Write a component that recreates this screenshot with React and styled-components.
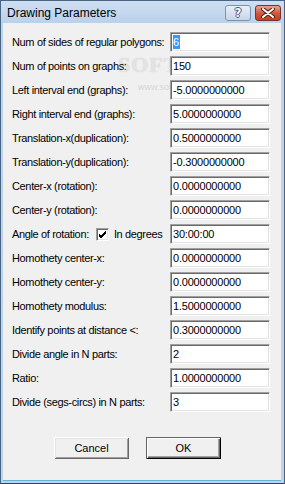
import React from "react";
import styled, { createGlobalStyle } from "styled-components";

const fields = [
    { label: "Num of sides of regular polygons:", value: "6", selected: true },
    { label: "Num of points on graphs:", value: "150" },
    { label: "Left interval end (graphs):", value: "-5.0000000000" },
    { label: "Right interval end (graphs):", value: "5.0000000000" },
    { label: "Translation-x(duplication):", value: "0.5000000000" },
    { label: "Translation-y(duplication):", value: "-0.3000000000" },
    { label: "Center-x (rotation):", value: "0.0000000000" },
    { label: "Center-y (rotation):", value: "0.0000000000" },
    { label: "Angle of rotation:", value: "30:00:00", checkbox: "In degrees" },
    { label: "Homothety center-x:", value: "0.0000000000" },
    { label: "Homothety center-y:", value: "0.0000000000" },
    { label: "Homothety modulus:", value: "1.5000000000" },
    { label: "Identify points at distance <:", value: "0.3000000000" },
    { label: "Divide angle in N parts:", value: "2" },
    { label: "Ratio:", value: "1.0000000000" },
    { label: "Divide (segs-circs) in N parts:", value: "3" },
];

const CheckMark = () => (
    <svg width="9" height="9" viewBox="0 0 9 9">
        <path d="M1 4 L3 6 L8 1 M1 5 L3 7 L8 2 M1 6 L3 8 L8 3" stroke="#000" strokeWidth="1" fill="none" />
    </svg>
);

const App = () => {
    return (
        <>
            <GlobalStyle />
            <Window>
                <TitleBar>
                    <Title>Drawing Parameters</Title>
                    <CaptionButtons>
                        <HelpButton>?</HelpButton>
                        <CloseButton>
                            <svg width="14" height="10" viewBox="0 0 14 10">
                                <path d="M2 1 L12 9 M12 1 L2 9" stroke="#5a1d12" strokeWidth="4" strokeLinecap="round" />
                                <path d="M2 1 L12 9 M12 1 L2 9" stroke="#fff" strokeWidth="2" strokeLinecap="round" />
                            </svg>
                        </CloseButton>
                    </CaptionButtons>
                </TitleBar>
                <Client>
                    <Watermark>
                        SOFTPEDIA<sup>™</sup>
                        <small>www.softpedia.com</small>
                    </Watermark>
                    <FieldGrid>
                        {fields.map((f) => (
                            <React.Fragment key={f.label}>
                                <Label>
                                    {f.label}
                                    {f.checkbox && (
                                        <>
                                            <CheckBox>
                                                <CheckMark />
                                            </CheckBox>
                                            <span>{f.checkbox}</span>
                                        </>
                                    )}
                                </Label>
                                <Field>
                                    {f.selected ? <Selection>{f.value}</Selection> : f.value}
                                </Field>
                            </React.Fragment>
                        ))}
                    </FieldGrid>
                    <ButtonRow>
                        <PushButton>Cancel</PushButton>
                        <PushButton $default>OK</PushButton>
                    </ButtonRow>
                </Client>
            </Window>
        </>
    );
};

export default App;

// Styled Components
const GlobalStyle = createGlobalStyle`
    html, body {
        margin: 0;
        padding: 0;
        background: #ffffff;
    }
`;

const Window = styled.div`
    width: 285px;
    height: 484px;
    box-sizing: border-box;
    display: flex;
    flex-direction: column;
    background: #bdd3ec;
    border: 1px solid #4a6484;
    border-bottom-color: #2f4763;
    padding: 0 3px 2px 2px;
    font-family: "Liberation Sans", Arial, sans-serif;
    font-size: 11px;
    color: #000;
`;

const TitleBar = styled.div`
    height: 22px;
    flex: none;
    display: flex;
    align-items: center;
    justify-content: space-between;
    margin: 0 -3px 0 -2px;
    padding: 0 3px 0 6px;
    background: linear-gradient(#cfdff2, #bad1ea);
`;

const Title = styled.div`
    font-size: 12px;
    color: #000;
    padding-top: 1px;
`;

const CaptionButtons = styled.div`
    display: flex;
    gap: 4px;
    margin-top: 2px;
`;

const CaptionButton = styled.div`
    width: 26px;
    height: 16px;
    box-sizing: border-box;
    border-radius: 3px;
    display: flex;
    align-items: center;
    justify-content: center;
`;

const HelpButton = styled(CaptionButton)`
    border: 1px solid #7f92ab;
    background: linear-gradient(#e8eff8, #c6d5e8);
    font-family: "DejaVu Sans", sans-serif;
    font-weight: bold;
    font-size: 12px;
    color: #f4f7fb;
    text-shadow: 1px 0 #4c5c72, -1px 0 #4c5c72, 0 1px #4c5c72, 0 -1px #4c5c72;
`;

const CloseButton = styled(CaptionButton)`
    border: 1px solid #7a3427;
    background: linear-gradient(#e9a391, #cf553d 55%, #c24127);
`;

const Client = styled.div`
    position: relative;
    flex: 1;
    background: #f0f0f0;
    padding: 9px 0 0 9px;
    border-bottom: 1px solid #63b4d8;
`;

const Watermark = styled.div`
    position: absolute;
    left: 115px;
    top: 29px;
    font-family: "Liberation Serif", serif;
    font-weight: bold;
    font-size: 22px;
    letter-spacing: 1px;
    color: rgba(232, 232, 232, 0.85);
    text-shadow: 0 0 1px #c8c8c8;
    pointer-events: none;

    sup {
        font-size: 6px;
        text-shadow: none;
        color: #d0d0d0;
    }

    small {
        position: absolute;
        left: 20px;
        top: 30px;
        font-family: "Liberation Sans", sans-serif;
        font-weight: normal;
        font-size: 9px;
        letter-spacing: 0;
        color: #d6d6d6;
        text-shadow: none;
    }
`;

const FieldGrid = styled.div`
    position: relative;
    display: grid;
    grid-template-columns: 158px 100px;
    grid-auto-rows: 20px;
    row-gap: 4px;
`;

const Label = styled.div`
    display: flex;
    align-items: center;
    white-space: nowrap;
    letter-spacing: -0.35px;
`;

const CheckBox = styled.span`
    width: 13px;
    height: 13px;
    flex: none;
    box-sizing: border-box;
    margin: 0 5px 0 7px;
    background: #fff;
    border: 1px solid;
    border-color: #a0a0a0 #fff #fff #a0a0a0;
    box-shadow: inset 1px 1px #696969, inset -1px -1px #e3e3e3;
    display: flex;
    align-items: center;
    justify-content: center;
`;

const Field = styled.div`
    box-sizing: border-box;
    height: 20px;
    background: #fff;
    border: 1px solid;
    border-color: #a0a0a0 #fff #fff #a0a0a0;
    box-shadow: inset 1px 1px #696969, inset -1px -1px #e3e3e3;
    padding: 0 2px;
    display: flex;
    align-items: center;
    font-size: 11px;
    letter-spacing: -0.2px;
`;

const Selection = styled.span`
    background: #3399ff;
    color: #fff;
    padding: 1px 1px 1px 0;
`;

const ButtonRow = styled.div`
    display: flex;
    gap: 17px;
    padding-left: 42px;
    margin-top: 25px;
`;

const PushButton = styled.div`
    width: 75px;
    height: 22px;
    box-sizing: border-box;
    display: flex;
    align-items: center;
    justify-content: center;
    background: #f0f0f0;
    font-size: 11px;
    box-shadow: ${(p) =>
        p.$default
            ? "inset 1px 1px #646464, inset -1px -1px #000, inset 2px 2px #fff, inset -2px -2px #696969, inset -3px -3px #a0a0a0"
            : "inset 1px 1px #fff, inset -1px -1px #696969, inset 2px 2px #e3e3e3, inset -2px -2px #a0a0a0"};
`;
